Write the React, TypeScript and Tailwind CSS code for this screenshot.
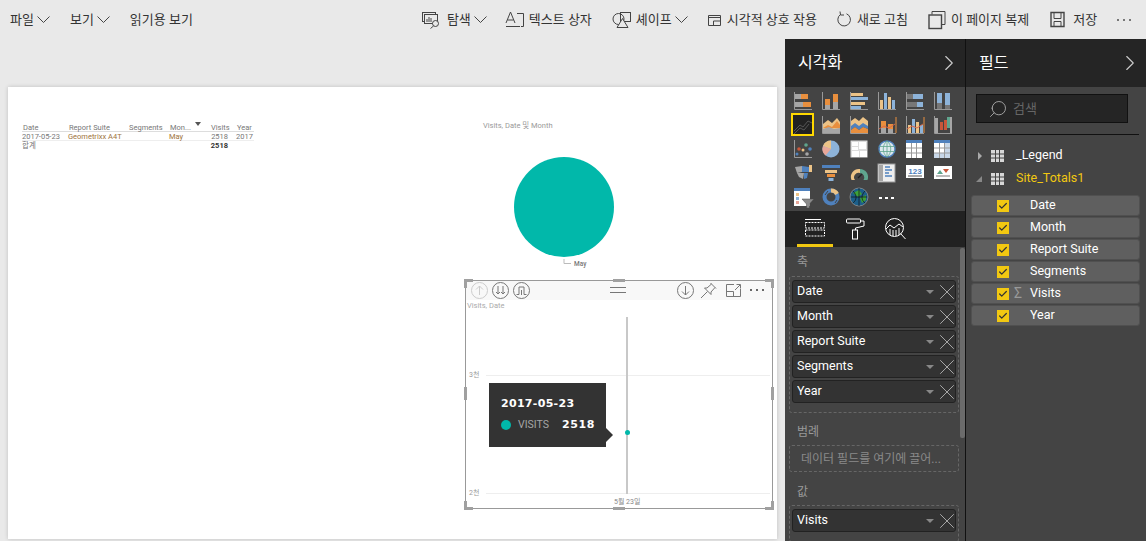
import { X, ChevronRight, Search, Check } from "lucide-react";
import type { ReactNode } from "react";

const Chevron = () => (
  <svg width="13" height="8" viewBox="0 0 13 8" fill="none" stroke="#444" strokeWidth="1">
    <path d="M0.5 0.5 L6.5 6.5 L12.5 0.5" />
  </svg>
);

const ToolIcon = (props: { children: ReactNode; w?: number }) => (
  <svg width={props.w || 20} height="20" viewBox={`0 0 ${props.w || 20} 20`} fill="none" stroke="#444" strokeWidth="1" className="shrink-0">
    {props.children}
  </svg>
);

const Dots = (props: { color: string }) => (
  <span className="flex gap-[4px]">
    <span className={`w-[2px] h-[2px] ${props.color}`} />
    <span className={`w-[2px] h-[2px] ${props.color}`} />
    <span className={`w-[2px] h-[2px] ${props.color}`} />
  </span>
);

const Toolbar = () => (
  <div className="h-[39px] shrink-0 flex items-center text-[13px] text-[#333] bg-[#e9e9e9] whitespace-nowrap">
    <span className="ml-[10px]">파일</span>
    <span className="ml-[3px]"><Chevron /></span>
    <span className="ml-[20px]">보기</span>
    <span className="ml-[3px]"><Chevron /></span>
    <span className="ml-[20px]">읽기용 보기</span>

    <span className="ml-[228px]">
      <ToolIcon>
        <rect x="1.5" y="2.5" width="13" height="9" />
        <rect x="3.5" y="4.5" width="13" height="9" fill="#e9e9e9" />
        <path d="M6 12V9M8 12V7M10 12V8" />
        <circle cx="14.5" cy="13.5" r="3" fill="#e9e9e9" />
        <path d="M12.5 16 L9.5 18.5" />
      </ToolIcon>
    </span>
    <span className="ml-[6px]">탐색</span>
    <span className="ml-[3px]"><Chevron /></span>

    <span className="ml-[18px]">
      <ToolIcon>
        <path d="M1 13 L5.5 2 L10 13 M2.5 10 H8.5" />
        <path d="M1 16.5 H15 M12 3.5 H18.5 V16.5 H16" />
      </ToolIcon>
    </span>
    <span className="ml-[4px]">텍스트 상자</span>

    <span className="ml-[20px]">
      <ToolIcon>
        <circle cx="6.5" cy="9" r="5.5" />
        <rect x="8.5" y="2.5" width="10" height="9" />
        <path d="M5 17.5 L10.5 8.5 L16 17.5 Z" fill="#e9e9e9" />
      </ToolIcon>
    </span>
    <span className="ml-[4px]">셰이프</span>
    <span className="ml-[3px]"><Chevron /></span>

    <span className="ml-[19px]">
      <ToolIcon w={15}>
        <path d="M1.5 15.5 V5.5 H13.5 V15.5 Z M1.5 7.5 H13.5" />
        <path d="M6.5 15.5 V11 H13.5" />
      </ToolIcon>
    </span>
    <span className="ml-[5px]">시각적 상호 작용</span>

    <span className="ml-[20px]">
      <ToolIcon w={15}>
        <path d="M3.5 4.5 A6.3 6.3 0 1 0 9.5 3.8" />
        <path d="M3 1.5 L3.5 5 L7 5" />
      </ToolIcon>
    </span>
    <span className="ml-[5px]">새로 고침</span>

    <span className="ml-[20px]">
      <ToolIcon w={18}>
        <rect x="1" y="5" width="12.5" height="13.5" strokeWidth="1.4" />
        <path d="M4 4.5 V1.5 H17 V14.5 H14" />
      </ToolIcon>
    </span>
    <span className="ml-[5px]">이 페이지 복제</span>

    <span className="ml-[21px]">
      <ToolIcon w={15}>
        <path d="M1 2.5 H14 V16.5 H1 Z" strokeWidth="1.4" />
        <path d="M4 2.5 V8.5 H11 V2.5 M4 16.5 V11.5 H11 V16.5" />
      </ToolIcon>
    </span>
    <span className="ml-[8px]">저장</span>
    <span className="ml-[20px]"><Dots color="bg-[#777]" /></span>
  </div>
);

const tableCols = ["Date", "Report Suite", "Segments", "Mon...", "Visits", "Year"];

const MiniTable = () => (
  <div className="absolute left-[14px] top-[36px] w-[232px] text-[7.5px] leading-[9px] text-[#777]">
    <div className="grid grid-cols-[46px_60px_41px_41px_26px_18px] border-b border-[#ddd] h-[9px]">
      {tableCols.map((c) => (
        <span key={c} className="pl-[1px] whitespace-nowrap">{c}</span>
      ))}
    </div>
    <div className="grid grid-cols-[46px_60px_41px_41px_26px_18px] border-b border-[#eee] h-[9px]">
      <span className="whitespace-nowrap">2017-05-23</span>
      <span className="whitespace-nowrap text-[#a0743c]">Geometrixx A4T</span>
      <span />
      <span className="text-[#a0743c]">May</span>
      <span className="text-right pr-[8px]">2518</span>
      <span>2017</span>
    </div>
    <div className="grid grid-cols-[46px_60px_41px_41px_26px_18px] h-[9px]">
      <span>합계</span>
      <span />
      <span />
      <span />
      <span className="text-right pr-[8px] font-bold text-[#333]">2518</span>
    </div>
    <span className="absolute left-[173px] -top-[1px] w-0 h-0 border-x-[3px] border-x-transparent border-t-[4px] border-t-[#555]" />
  </div>
);

const PieVisual = () => (
  <>
    <div className="absolute left-[475px] top-[33px] text-[7.5px] text-[#999] whitespace-nowrap">Visits, Date 및 Month</div>
    <div className="absolute left-[506px] top-[70px] w-[100px] h-[100px] rounded-full bg-[#01b8aa]" />
    <svg className="absolute left-[555px] top-[172px]" width="9" height="8" fill="none" stroke="#bbb" strokeWidth="1">
      <path d="M1 0 V4.5 H8" />
    </svg>
    <div className="absolute left-[566px] top-[173px] text-[6.5px] font-medium text-[#777]">May</div>
  </>
);

const Handle = (props: { className: string }) => (
  <span className={`absolute bg-[#a0a0a0] ${props.className}`} />
);

const RoundIcon = (props: { children: ReactNode; stroke?: string }) => (
  <svg width="17" height="17" viewBox="0 0 17 17" fill="none" stroke={props.stroke || "#777"} strokeWidth="1">
    <circle cx="8.5" cy="8.5" r="8" />
    {props.children}
  </svg>
);

const LineVisual = () => (
  <div className="absolute left-[457px] top-[193px] w-[308px] h-[229px] border border-[#999]">
    <div className="h-[19px] bg-[#f8f8f8] flex items-center pl-[5px] relative">
      <div className="flex gap-[4px]">
        <RoundIcon stroke="#ccc"><path d="M8.5 13 V4 M5 7.5 L8.5 4 L12 7.5" /></RoundIcon>
        <RoundIcon><path d="M6 4 V12 M4 10 L6 12 L8 10 M11 4 V12 M9 10 L11 12 L13 10" /></RoundIcon>
        <RoundIcon><path d="M3.5 12.5 H6 V5 H11 V12.5 H13.5 M8.5 8 V13" /></RoundIcon>
      </div>
      <svg className="absolute left-[144px] top-[6px]" width="16" height="6" stroke="#777" strokeWidth="1">
        <path d="M0 0.5 H16 M0 5.5 H16" />
      </svg>
      <div className="absolute left-[211px] top-[1px] flex items-center">
        <RoundIcon><path d="M8.5 4 V13 M5 9.5 L8.5 13 L12 9.5" /></RoundIcon>
        <svg className="ml-[6px]" width="17" height="17" fill="none" stroke="#777" strokeWidth="1">
          <path d="M10.5 1 L16 6.5 M11.5 2 L7 6 L4.5 6 L11 12.5 L11 10 L15 5.5 M7.5 9.5 L1 16" />
        </svg>
        <svg className="ml-[9px]" width="15" height="13" fill="none" stroke="#777" strokeWidth="1">
          <path d="M8 0.5 H0.5 V12.5 H14.5 V5 M0.5 7.5 H7.5 V12.5 M9 6 L14 1 M10.5 0.5 H14.5 V4.5" />
        </svg>
        <span className="ml-[9px] -mt-[2px]"><Dots color="bg-[#666]" /></span>
      </div>
    </div>
    <div className="text-[7.5px] text-[#aaa] pl-[1px] leading-[9px] mt-[1px]">Visits, Date</div>

    <div className="absolute left-[20px] right-[2px] top-[94px] h-px bg-[#eee]" />
    <div className="absolute left-[20px] right-[2px] top-[212px] h-px bg-[#eee]" />
    <div className="absolute left-[3px] top-[89px] text-[7px] text-[#999]">3천</div>
    <div className="absolute left-[3px] top-[207px] text-[7px] text-[#999]">2천</div>
    <div className="absolute left-[148px] top-[216px] text-[7px] text-[#888] whitespace-nowrap">5월 23일</div>

    <div className="absolute left-[160px] top-[36px] w-[2px] h-[177px] bg-[#c8c8c8]" />
    <div className="absolute left-[159px] top-[149px] w-[5px] h-[5px] rounded-full bg-[#01b8aa]" />

    <div className="absolute left-[23px] top-[102px] w-[117px] h-[64px] bg-[#333] pl-[12px] pt-[13px] text-white">
      <div className="font-bold leading-[16px] tracking-[0.3px] font-['DejaVu_Sans',sans-serif] text-[11px]">2017-05-23</div>
      <div className="flex items-center mt-[5px]">
        <span className="w-[10px] h-[10px] rounded-full bg-[#01b8aa]" />
        <span className="ml-[7px] text-[10.5px] text-[#a6a6a6]">VISITS</span>
        <span className="ml-[13px] text-[11px] font-bold tracking-[0.6px] font-['DejaVu_Sans',sans-serif]">2518</span>
      </div>
      <span className="absolute -right-[7px] top-[45px] w-0 h-0 border-y-[7px] border-y-transparent border-l-[7px] border-l-[#333]" />
    </div>

    <Handle className="-left-[2px] -top-[2px] w-[9px] h-[3px]" />
    <Handle className="-left-[2px] -top-[2px] w-[3px] h-[9px]" />
    <Handle className="left-[147px] -top-[2px] w-[12px] h-[3px]" />
    <Handle className="-right-[2px] -top-[2px] w-[9px] h-[3px]" />
    <Handle className="-right-[2px] -top-[2px] w-[3px] h-[9px]" />
    <Handle className="-left-[2px] top-[106px] w-[3px] h-[13px]" />
    <Handle className="-right-[2px] top-[106px] w-[3px] h-[13px]" />
    <Handle className="-left-[2px] -bottom-[2px] w-[9px] h-[3px]" />
    <Handle className="-left-[2px] -bottom-[2px] w-[3px] h-[9px]" />
    <Handle className="left-[147px] -bottom-[2px] w-[12px] h-[3px]" />
    <Handle className="-right-[2px] -bottom-[2px] w-[9px] h-[3px]" />
    <Handle className="-right-[2px] -bottom-[2px] w-[3px] h-[9px]" />
  </div>
);

const ReportCanvas = () => (
  <div className="flex-1 pt-[48px] pl-[8px] bg-[#e9e9e9] overflow-hidden">
    <div className="relative w-[769px] h-[452px] bg-white shadow-[0_0_4px_rgba(0,0,0,0.18)]">
      <MiniTable />
      <PieVisual />
      <LineVisual />
    </div>
  </div>
);

const PanelHeader = (props: { title: string }) => (
  <div className="h-[48px] shrink-0 bg-[#252525] flex items-center justify-between pl-[13px] pr-[3px] text-white text-[16px]">
    <span className="-mt-[1px]">{props.title}</span>
    <ChevronRight size={26} strokeWidth={1} color="#ccc" />
  </div>
);

const Y = "#ffd800";
const O = "#e88f3e";
const G = "#a6a6a6";
const B = "#8db3d9";
const T = "#ecc387";
const D = "#777";

const Axes = () => <path d="M0.5 0 V17.5 H18" stroke="#999" fill="none" />;

const viz: ReactNode[] = [
  <><rect x="1" y="2" width="13" height="5" fill={O} /><rect x="1" y="2" width="6" height="5" fill={G} /><rect x="1" y="10" width="16" height="5" fill={O} /><rect x="1" y="10" width="8" height="5" fill={G} /><Axes /></>,
  <><rect x="3" y="7" width="5" height="10" fill={O} /><rect x="3" y="13" width="5" height="4" fill={G} /><rect x="11" y="2" width="5" height="15" fill={O} /><rect x="11" y="10" width="5" height="7" fill={G} /><Axes /></>,
  <><rect x="1" y="1" width="12" height="3" fill={T} /><rect x="1" y="5" width="17" height="3" fill={B} /><rect x="1" y="10" width="14" height="3" fill={T} /><rect x="1" y="14" width="10" height="3" fill={B} /><Axes /></>,
  <><rect x="2" y="8" width="3" height="9" fill={T} /><rect x="6" y="1" width="3" height="16" fill={B} /><rect x="10" y="5" width="3" height="12" fill={T} /><rect x="14" y="8" width="3" height="9" fill={B} /><Axes /></>,
  <><rect x="1" y="2" width="16" height="5" fill={B} /><rect x="1" y="2" width="6" height="5" fill={D} /><rect x="1" y="10" width="16" height="5" fill={B} /><rect x="1" y="10" width="10" height="5" fill={D} /><Axes /></>,
  <><rect x="3" y="1" width="5" height="16" fill={B} /><rect x="3" y="11" width="5" height="6" fill={D} /><rect x="11" y="1" width="5" height="16" fill={B} /><rect x="11" y="13" width="5" height="4" fill={D} /><Axes /></>,
  <><rect x="-2" y="-2" width="21" height="21" fill="#222" stroke={Y} strokeWidth="2" /><path d="M0 15 L6 9 L9 11 L14 5 L18 7 M0 18 L6 12 L10 14 L15 8" stroke="#555" fill="none" /></>,
  <><path d="M1 8 L6 4 L10 7 L15 2 L18 6 V17 H1 Z" fill={T} /><path d="M1 12 L6 9 L10 11 L15 5 L18 9 V12 H1 Z" fill={O} /><path d="M1 13 L7 11 L12 13 L18 12 V17 H1 Z" fill={G} /><Axes /></>,
  <><path d="M1 5 L5 2 L9 5 L13 1 L18 5 V10 H1 Z" fill={T} /><path d="M1 10 L5 7 L9 10 L13 7 L18 10 V13 L13 11 L9 14 L5 11 L1 14 Z" fill="#4f81bd" /><path d="M1 14 L5 11 L9 14 L13 11 L18 13 V17 H1 Z" fill={O} /><Axes /></>,
  <><rect x="3" y="5" width="5" height="12" fill={O} /><rect x="3" y="12" width="5" height="5" fill={G} /><rect x="10" y="8" width="5" height="9" fill={O} /><rect x="10" y="13" width="5" height="4" fill={G} /><path d="M1 13 L6 10 L11 12 L17 8" stroke="#d9694a" fill="none" /><path d="M18 1 V17" stroke={O} /><Axes /></>,
  <><rect x="2" y="9" width="3" height="8" fill={T} /><rect x="6" y="3" width="3" height="14" fill={B} /><rect x="10" y="6" width="3" height="11" fill={T} /><rect x="14" y="9" width="3" height="8" fill={B} /><path d="M1 13 L6 10 L11 12 L17 8" stroke="#d9694a" fill="none" /><path d="M18 1 V17" stroke={O} /><Axes /></>,
  <><rect x="1" y="2" width="3" height="15" fill={G} /><rect x="6" y="6" width="3" height="8" fill="#c9573a" /><rect x="10" y="4" width="3" height="10" fill="#c9573a" /><rect x="13" y="1" width="3" height="11" fill="#5fa58e" /><rect x="16" y="1" width="2" height="16" fill={G} /><Axes /></>,
  <><circle cx="5" cy="9" r="1.8" fill="#c9573a" /><circle cx="12" cy="5" r="1.8" fill="#5fa58e" /><circle cx="9" cy="10" r="1.5" fill={T} /><circle cx="16" cy="9" r="1.8" fill="#4f81bd" /><circle cx="3" cy="14" r="1.5" fill="#4f81bd" /><circle cx="13" cy="14" r="1.8" fill={G} /><Axes /></>,
  <><circle cx="9" cy="9" r="8.5" fill={B} /><path d="M9 9 L1 6 A8.5 8.5 0 0 1 9 0.5 Z" fill={T} /><path d="M9 9 L1 6 A8.5 8.5 0 0 0 3.5 15.5 Z" fill="#e8a79a" /></>,
  <><rect x="0.5" y="0.5" width="17" height="17" fill="#ddd" /><rect x="2" y="2" width="6" height="4" fill="#fff" /><rect x="9" y="2" width="7" height="7" fill="#fff" /><rect x="2" y="7" width="6" height="3" fill="#fff" /><rect x="2" y="11" width="7" height="6" fill="#fff" /><rect x="10" y="11" width="7" height="6" fill="#fff" /></>,
  <><circle cx="9" cy="9" r="8" fill="#dde8ee" stroke="#4f81bd" strokeWidth="1.4" /><path d="M1 6.5 H17 M1 11.5 H17 M9 1 V17 M9 1 C4 5 4 13 9 17 M9 1 C14 5 14 13 9 17" stroke="#5fa58e" fill="none" strokeWidth="0.8" /></>,
  <><rect x="0" y="0" width="16" height="18" fill="#fff" /><rect x="0" y="0" width="16" height="3" fill="#4f81bd" /><path d="M5.5 3 V18 M10.5 3 V18 M0 8 H16 M0 13 H16" stroke="#999" /></>,
  <><rect x="0" y="0" width="16" height="18" fill="#fff" /><rect x="0" y="0" width="16" height="3" fill="#4f81bd" /><rect x="10" y="3" width="6" height="15" fill="#c8d7e8" /><rect x="0" y="13" width="16" height="5" fill="#c8d7e8" /><path d="M5.5 3 V18 M10.5 3 V18 M0 8 H16 M0 13 H16" stroke="#999" /></>,
  <><path d="M1 3 L8 2 L8 8 L3 9 Z" fill={G} /><path d="M8 2 L15 3 L15 8 L8 8 Z" fill="#4f81bd" /><path d="M3 9 L10 9 L9 15 L5 13 Z" fill={G} /><path d="M10 9 L14 9 L13 14 L10 15 Z" fill="#4f81bd" /><rect x="15" y="1" width="3" height="7" fill={T} /></>,
  <><rect x="0" y="1" width="18" height="3" fill="#4f81bd" /><rect x="3" y="6" width="12" height="3" fill={T} /><rect x="5" y="10" width="8" height="3" fill={O} /><rect x="6.5" y="14" width="5" height="3" fill={B} /></>,
  <><path d="M1.5 16 A8 8 0 0 1 10 5 L10 9 A4.5 4.5 0 0 0 5 16 Z" fill={T} /><path d="M10 5 A8 8 0 0 1 17.5 16 H13.5 A4.5 4.5 0 0 0 10 9 Z" fill="#5fa58e" /><path d="M8 14 L12 10" stroke="#222" strokeWidth="1.5" /></>,
  <><rect x="0" y="0" width="17" height="18" fill="#eee" stroke="#999" /><rect x="1" y="1" width="4" height="16" fill={G} /><path d="M7 3 H12 M7 6 H14 M7 9 H11 M7 12 H14" stroke="#4f81bd" strokeWidth="1.4" /></>,
  <><rect x="0" y="1" width="18" height="13" fill="#fff" /><text x="9" y="10" textAnchor="middle" fontSize="8" fontWeight="700" fill="#4f81bd" fontFamily="Liberation Sans">123</text><path d="M2 12 H16" stroke="#555" /></>,
  <><rect x="0" y="2" width="18" height="13" fill="#fff" /><path d="M3 10 L6 6 L9 10 Z" fill="#5fa58e" /><path d="M9 5 H15 L12 9 Z" fill="#c9573a" /><path d="M2 12 H16" stroke="#777" /></>,
  <><rect x="0" y="0" width="16" height="18" fill="#fff" /><rect x="0" y="0" width="16" height="3" fill="#4f81bd" /><rect x="2" y="5" width="3" height="3" fill={T} /><rect x="2" y="9" width="3" height="3" fill={B} /><rect x="2" y="13" width="3" height="3" fill="#e8a79a" /><path d="M8 11 H20 L15.5 16 V20 H12.5 V16 Z" fill="#8a8a8a" stroke="#444" strokeWidth="0.5" /></>,
  <><circle cx="9" cy="9" r="6.5" fill="none" stroke="#4f81bd" strokeWidth="4" /><path d="M9 2.5 A6.5 6.5 0 0 1 15 6" fill="none" stroke={T} strokeWidth="4" /><path d="M3 7 L6 3" stroke="#444" strokeWidth="1" /><path d="M15 12 L13 15" stroke="#444" strokeWidth="1" /></>,
  <><circle cx="9" cy="9" r="9" fill="#1c5f8a" stroke="#999" strokeWidth="0.7" /><path d="M3 5 L9 2 L12 6 L8 9 Z M10 10 L16 7 L16 12 L12 15 Z" fill="#3da13a" /><path d="M1 9 H17 M9 0 V18 M3 3 C7 7 7 12 3 15 M15 3 C11 7 11 12 15 15" stroke="#111" fill="none" strokeWidth="0.7" /></>,
];

const VizGallery = () => (
  <div className="h-[124px] shrink-0 bg-[#444] pl-[9px] pt-[5px] grid grid-cols-[repeat(6,28px)] auto-rows-[24px]">
    {viz.map((v, i) => (
      <svg key={i} width="19" height="19" viewBox="0 0 19 19" className="overflow-visible">
        {v}
      </svg>
    ))}
    <div className="flex gap-[3px] pl-[1px] pt-[9px]">
      <span className="w-[3px] h-[2px] bg-white" />
      <span className="w-[3px] h-[2px] bg-white" />
      <span className="w-[3px] h-[2px] bg-white" />
    </div>
  </div>
);

const VizTabs = () => (
  <div className="h-[36px] shrink-0 bg-[#222] flex pl-[12px]">
    <div className="w-[36px] h-full border-b-[3px] border-[#f2c811] flex justify-center pt-[8px]">
      <svg width="20" height="18" fill="none" stroke="#fff" strokeWidth="1">
        <path d="M0 0.5 H16" />
        <path d="M0.5 3.5 H19.5 V9 H0.5 Z M0.5 11 H19.5 V17 H0.5 Z" strokeDasharray="2 1" />
      </svg>
    </div>
    <div className="ml-[13px] pt-[7px]">
      <svg width="19" height="22" fill="none" stroke="#fff" strokeWidth="1">
        <rect x="0.5" y="1" width="14" height="4" rx="1" />
        <path d="M14.5 3 H18 V8 L9.5 10 V12" />
        <rect x="6.5" y="12" width="5" height="9" />
      </svg>
    </div>
    <div className="ml-[20px] pt-[7px]">
      <svg width="21" height="22" fill="none" stroke="#fff" strokeWidth="1">
        <circle cx="9.5" cy="9.5" r="9" />
        <path d="M1 11 L5 7 L9 10 L14 6 L18 9" />
        <path d="M5 11 V17 M8 12 V18 M11 12 V18 M14 10 V17" />
        <path d="M15.5 15.5 L20.5 21" />
      </svg>
    </div>
  </div>
);

const Pill = (props: { name: string }) => (
  <div className="h-[23px] bg-[#333] border border-[#222] rounded-[3px] flex items-center pl-[4px] pr-[1px] text-[12.5px] text-white">
    <span className="flex-1 truncate">{props.name}</span>
    <span className="w-0 h-0 border-x-[4px] border-x-transparent border-t-[4px] border-t-[#888]" />
    <X size={26} strokeWidth={0.9} color="#aaa" className="-mr-[6px] shrink-0" />
  </div>
);

const WellLabel = (props: { text: string; className: string }) => (
  <div className={`text-[12px] leading-[16px] text-[#999] ${props.className}`}>{props.text}</div>
);

const FieldWells = () => (
  <div className="flex-1 bg-[#444] relative pl-[4px] pr-[6px] overflow-hidden">
    <WellLabel text="축" className="pl-[8px] pt-[7px]" />
    <div className="mt-[6px] border border-dashed border-[#666] rounded-[3px] px-[2px] pt-[3px] pb-[9px] flex flex-col gap-[2px]">
      {["Date", "Month", "Report Suite", "Segments", "Year"].map((f) => (
        <Pill key={f} name={f} />
      ))}
    </div>
    <WellLabel text="범례" className="pl-[8px] mt-[11px]" />
    <div className="mt-[5px] h-[27px] border border-dashed border-[#666] rounded-[3px] flex items-center pl-[11px] text-[12px] text-[#8a8a8a] whitespace-nowrap">
      데이터 필드를 여기에 끌어...
    </div>
    <WellLabel text="값" className="pl-[8px] mt-[12px]" />
    <div className="mt-[5px] border border-dashed border-[#666] rounded-[3px] px-[2px] pt-[3px] pb-[9px]">
      <Pill name="Visits" />
    </div>
    <div className="absolute right-0 top-[1px] w-[5px] h-[190px] bg-[#6b6b6b] rounded-[2px]" />
  </div>
);

const TableGlyph = () => (
  <svg width="13" height="12" className="shrink-0">
    <rect width="13" height="12" fill="#d8d8d8" />
    <path d="M4.5 0 V12 M8.5 0 V12 M0 4 H13 M0 8 H13" stroke="#444" />
  </svg>
);

const FieldRow = (props: { name: string; sigma?: boolean }) => (
  <div className="h-[21px] bg-[#5f5f5f] border border-[#505050] rounded-[3px] flex items-center text-[12.5px] text-white relative">
    <span className="ml-[25px] w-[12px] h-[12px] bg-[#f2c811] flex items-center justify-center">
      <Check size={10} strokeWidth={3} color="#333" />
    </span>
    {props.sigma && <span className="absolute left-[42px] text-[#999] text-[14px]">Σ</span>}
    <span className="ml-[21px]">{props.name}</span>
  </div>
);

const FieldsPanel = () => (
  <div className="w-[180px] shrink-0 flex flex-col">
    <PanelHeader title="필드" />
    <div className="flex-1 bg-[#444]">
      <div className="mt-[7px] ml-[10px] w-[152px] h-[29px] bg-[#252525] border border-[#111] flex items-center pl-[11px] text-[13px] text-[#666]">
        <Search size={20} strokeWidth={1.1} color="#aaa" className="-scale-x-100" />
        <span className="ml-[5px]">검색</span>
      </div>
      <div className="mt-[11px] w-[173px] h-px bg-[#111]" />
      <div className="mt-[9px] h-[23px] flex items-center text-[12.5px] text-white pl-[12px]">
        <span className="w-0 h-0 border-y-[4px] border-y-transparent border-l-[4px] border-l-[#aaa]" />
        <span className="ml-[9px]"><TableGlyph /></span>
        <span className="ml-[12px]">_Legend</span>
      </div>
      <div className="h-[23px] flex items-center text-[12.5px] text-[#f2c811] pl-[10px]">
        <span className="w-0 h-0 border-l-[6px] border-l-transparent border-b-[6px] border-b-[#888]" />
        <span className="ml-[9px]"><TableGlyph /></span>
        <span className="ml-[12px]">Site_Totals1</span>
      </div>
      <div className="mt-[5px] ml-[5px] w-[169px] flex flex-col gap-px">
        <FieldRow name="Date" />
        <FieldRow name="Month" />
        <FieldRow name="Report Suite" />
        <FieldRow name="Segments" />
        <FieldRow name="Visits" sigma />
        <FieldRow name="Year" />
      </div>
    </div>
  </div>
);

const App = () => {
  return (
    <div className="w-[1146px] h-[541px] flex flex-col overflow-hidden bg-[#e9e9e9] font-['Roboto','Noto_Sans_CJK_KR',sans-serif]">
      <Toolbar />
      <div className="flex-1 flex min-h-0">
        <ReportCanvas />
        <div className="w-[181px] shrink-0 flex flex-col border-r border-[#111]">
          <PanelHeader title="시각화" />
          <VizGallery />
          <VizTabs />
          <FieldWells />
        </div>
        <FieldsPanel />
      </div>
    </div>
  );
};

export default App;
